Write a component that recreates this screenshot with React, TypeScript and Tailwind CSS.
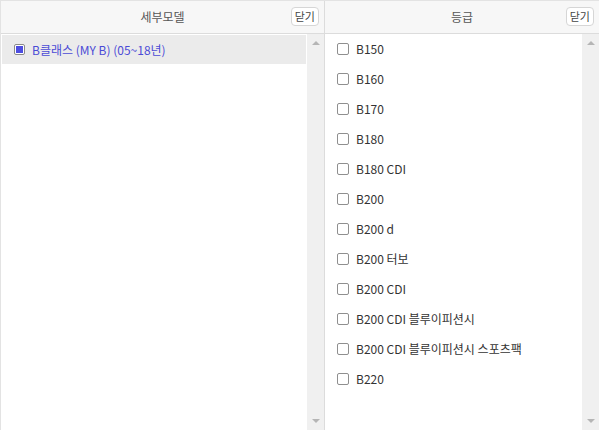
const grades = [
  "B150",
  "B160",
  "B170",
  "B180",
  "B180 CDI",
  "B200",
  "B200 d",
  "B200 터보",
  "B200 CDI",
  "B200 CDI 블루이피션시",
  "B200 CDI 블루이피션시 스포츠팩",
  "B220",
];

const font = { fontFamily: '"Noto Sans CJK KR", "Noto Sans", sans-serif' };

function CloseButton() {
  return (
    <button className="h-[19px] px-[3px] flex items-center rounded-[4px] border border-[#d6d6d6] bg-white text-[11px] leading-none text-[#444]">
      닫기
    </button>
  );
}

function Scrollbar() {
  return (
    <div className="w-[17px] shrink-0 bg-[#f0f0f0] flex flex-col items-center justify-between py-[7px]">
      <div className="w-0 h-0 border-l-[4px] border-r-[4px] border-b-[4px] border-l-transparent border-r-transparent border-b-[#b5b5b5]" />
      <div className="w-0 h-0 border-l-[4px] border-r-[4px] border-t-[4px] border-l-transparent border-r-transparent border-t-[#b5b5b5]" />
    </div>
  );
}

function Header({ title }: { title: string }) {
  return (
    <div className="h-[33px] shrink-0 flex items-center justify-center relative bg-[#f7f7f7] border-b border-[#dcdcdc]">
      <span className="text-[12px] text-[#555]">{title}</span>
      <div className="absolute right-[5px] top-[6px] flex">
        <CloseButton />
      </div>
    </div>
  );
}

export default function App() {
  return (
    <div style={font} className="w-[599px] h-[430px] flex bg-white border-t border-l border-[#e3e3e3] overflow-hidden">
      <div className="w-[324px] shrink-0 flex flex-col border-r border-[#dcdcdc]">
        <Header title="세부모델" />
        <div className="flex flex-1 min-h-0">
          <div className="flex-1 pt-[1px] pl-[1px] pr-[1px]">
            <div className="h-[29px] bg-[#ebebeb] flex items-center pl-[12px] gap-[7px]">
              <div className="w-[11px] h-[11px] border border-[#8a8a8a] rounded-[2px] bg-white flex items-center justify-center">
                <div className="w-[7px] h-[7px] bg-[#4d4de0]" />
              </div>
              <span className="text-[12px] text-[#4b4bd6]">B클래스 (MY B) (05~18년)</span>
            </div>
          </div>
          <Scrollbar />
        </div>
      </div>
      <div className="flex-1 flex flex-col">
        <Header title="등급" />
        <div className="flex flex-1 min-h-0">
          <div className="flex-1 pl-[12px]">
            {grades.map((g) => (
              <div key={g} className="h-[30px] flex items-center gap-[7px]">
                <div className="w-[12px] h-[12px] border border-[#8f8f8f] rounded-[2px] bg-white" />
                <span className="text-[12px] text-[#333]">{g}</span>
              </div>
            ))}
          </div>
          <Scrollbar />
        </div>
      </div>
    </div>
  );
}
